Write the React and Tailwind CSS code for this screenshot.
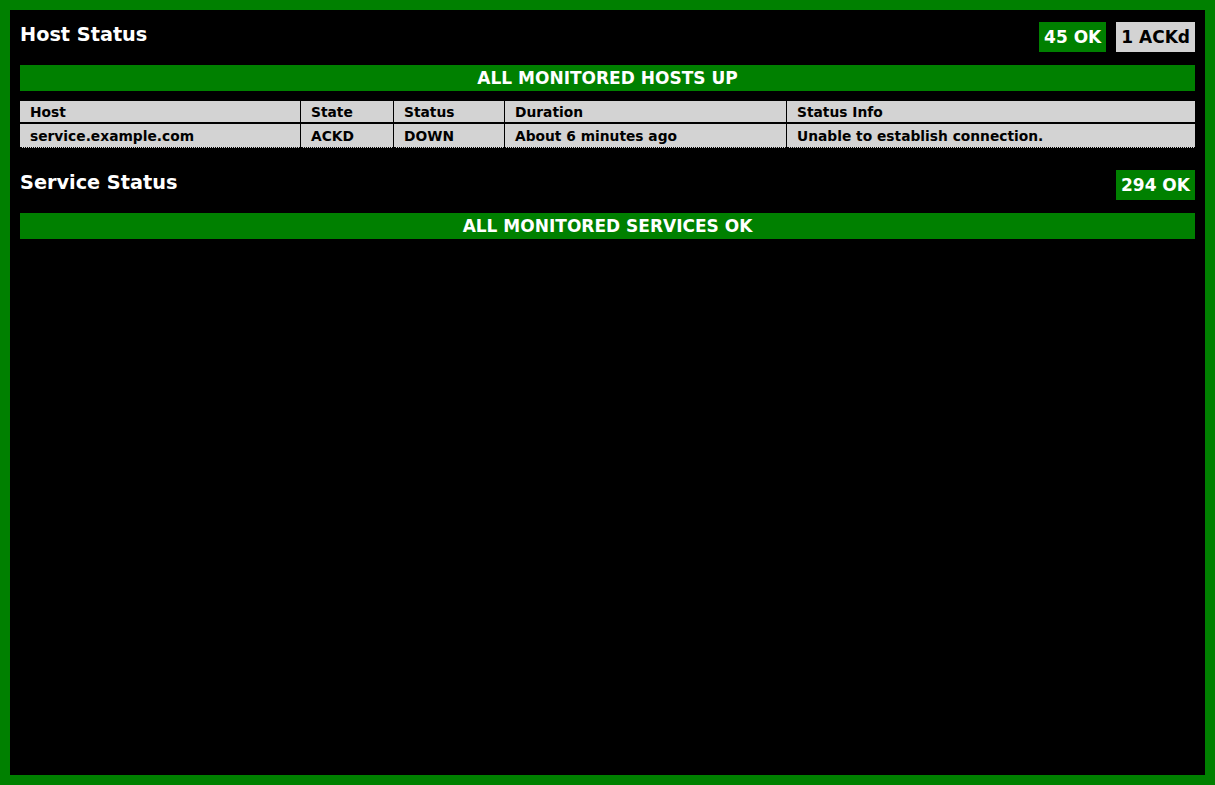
const hosts = [
  {
    host: "service.example.com",
    state: "ACKD",
    status: "DOWN",
    duration: "About 6 minutes ago",
    info: "Unable to establish connection.",
  },
];

function Badge({ children, tone }) {
  return (
    <div
      className={
        "h-[30px] px-[5px] flex items-center text-[17px] leading-none " +
        (tone === "ok" ? "bg-[#008000] text-white" : "bg-[#d3d3d3] text-black")
      }>
      {children}
    </div>
  );
}

function SectionHeader({ title, badges }) {
  return (
    <div className="flex items-start justify-between h-[30px]">
      <h2 className="text-[19.3px] leading-[23px] pt-px text-white">{title}</h2>
      <div className="flex gap-[10px]">
        {badges.map(([label, tone]) => (
          <Badge key={label} tone={tone}>
            {label}
          </Badge>
        ))}
      </div>
    </div>
  );
}

function Banner({ children }) {
  return (
    <div className="mt-[13px] h-[26px] bg-[#008000] text-white text-[17px] flex items-center justify-center leading-none">
      {children}
    </div>
  );
}

function HostTable() {
  const cols = ["Host", "State", "Status", "Duration", "Status Info"];
  return (
    <div className="mt-[10px] grid grid-cols-[280px_92px_110px_281px_1fr] gap-x-px gap-y-[2px] bg-black text-black text-[13.8px]">
      {cols.map((c) => (
        <div key={c} className="bg-[#d3d3d3] h-[21px] pl-[10px] pt-[2px] flex items-center">
          {c}
        </div>
      ))}
      {hosts.map((h) =>
        [h.host, h.state, h.status, h.duration, h.info].map((v, i) => (
          <div
            key={h.host + i}
            className="bg-[#d3d3d3] h-[24px] pl-[10px] pt-[1px] flex items-center border-b border-dotted border-black">
            {v}
          </div>
        ))
      )}
    </div>
  );
}

export default function App() {
  return (
    <div className="min-h-screen bg-black border-[10px] border-[#008000] p-[10px] pt-[12px] font-bold font-['DejaVu_Sans',Verdana,sans-serif]">
      <SectionHeader
        title="Host Status"
        badges={[
          ["45 OK", "ok"],
          ["1 ACKd", "ack"],
        ]}
      />
      <Banner>ALL MONITORED HOSTS UP</Banner>
      <HostTable />
      <div className="mt-[22px]">
        <SectionHeader title="Service Status" badges={[["294 OK", "ok"]]} />
        <Banner>ALL MONITORED SERVICES OK</Banner>
      </div>
    </div>
  );
}
